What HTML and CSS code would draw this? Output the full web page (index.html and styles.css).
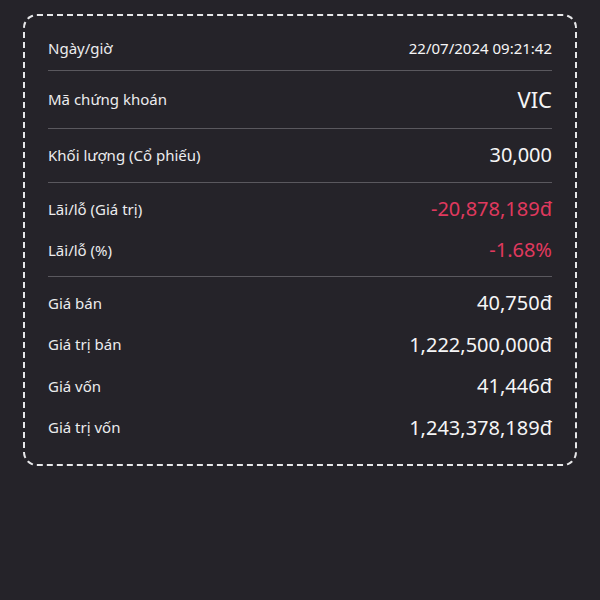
FILE: index.html
```html
<!DOCTYPE html>
<html lang="vi">
<head>
<meta charset="utf-8">
<link rel="stylesheet" href="styles.css">
</head>
<body>
<div class="card">
  <div class="row r1"><span class="label">Ngày/giờ</span><span class="value small">22/07/2024 09:21:42</span></div>
  <div class="divider"></div>
  <div class="row r2"><span class="label">Mã chứng khoán</span><span class="value big">VIC</span></div>
  <div class="divider"></div>
  <div class="row r3"><span class="label">Khối lượng (Cổ phiếu)</span><span class="value">30,000</span></div>
  <div class="divider"></div>
  <div class="group">
    <div class="row sub"><span class="label">Lãi/lỗ (Giá trị)</span><span class="value neg">-20,878,189đ</span></div>
    <div class="row sub"><span class="label">Lãi/lỗ (%)</span><span class="value neg">-1.68%</span></div>
  </div>
  <div class="divider"></div>
  <div class="group last">
    <div class="row sub"><span class="label">Giá bán</span><span class="value">40,750đ</span></div>
    <div class="row sub"><span class="label">Giá trị bán</span><span class="value">1,222,500,000đ</span></div>
    <div class="row sub"><span class="label">Giá vốn</span><span class="value">41,446đ</span></div>
    <div class="row sub"><span class="label">Giá trị vốn</span><span class="value">1,243,378,189đ</span></div>
  </div>
</div>
</body>
</html>
```
FILE: styles.css
```css
* { box-sizing: border-box; }
html, body {
  margin: 0;
  padding: 0;
  background: #252329;
  width: 600px;
  height: 600px;
  font-family: "Noto Sans", sans-serif;
}
.card {
  margin: 14px 0 0 23px;
  width: 554px;
  height: 452px;
  border: 2px dashed #e8e8ea;
  border-radius: 14px;
  padding: 0 23px;
}
.row {
  display: flex;
  align-items: center;
  justify-content: space-between;
}
.r1 { height: 54px; padding-top: 10px; }
.r2 { height: 57px; padding-bottom: 2px; }
.r3 { height: 53px; padding-bottom: 2px; }
.group { padding: 5px 0 6px; }
.group.last { padding: 5px 0 0; }
.sub { height: 41px; }
.group.last .sub { height: 41.5px; }
.divider {
  height: 1px;
  background: #5a585e;
}
.label {
  font-size: 15px;
  color: #ececee;
}
.value {
  font-size: 20px;
  color: #f5f5f6;
}
.value.small { font-size: 15px; }
.value.big { font-size: 22px; }
.value.neg { color: #e0395e; }
```
